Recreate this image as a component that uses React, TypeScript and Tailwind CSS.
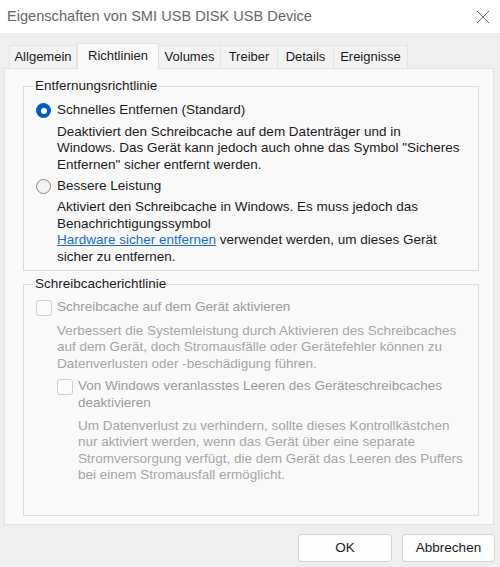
import React from "react";

const Radio = ({ checked }: { checked: boolean }) =>
  checked ? (
    <span className="flex h-[15px] w-[15px] shrink-0 items-center justify-center rounded-full bg-[#005fb8]">
      <span className="h-[6px] w-[6px] rounded-full bg-white" />
    </span>
  ) : (
    <span className="block h-[15px] w-[15px] shrink-0 rounded-full border border-[#8a8a8a] bg-[#f4f4f4]" />
  );

const Check = () => (
  <span className="block h-[16px] w-[16px] shrink-0 rounded-[3px] border border-[#cfcfcf] bg-[#fbfbfb]" />
);

const tabs = [
  { label: "Allgemein", w: "w-[68px]" },
  { label: "Richtlinien", w: "w-[82px]", active: true },
  { label: "Volumes", w: "w-[63px]" },
  { label: "Treiber", w: "w-[58px]" },
  { label: "Details", w: "w-[57px]" },
  { label: "Ereignisse", w: "w-[75px]" },
];

export default function App() {
  return (
    <div className="flex h-[567px] w-[500px] flex-col overflow-hidden bg-[#efefef] font-['Liberation_Sans',Arial,sans-serif] text-[13px] leading-[16.4px] text-[#1b1b1b]">
      {/* Title bar */}
      <div className="flex h-[33px] shrink-0 items-center justify-between bg-white pl-[7px] pr-[10px]">
        <span className="text-[14.6px] text-[#666666]">Eigenschaften von SMI USB DISK USB Device</span>
        <svg width="14" height="14" viewBox="0 0 14 14">
          <path d="M1 1 L13 13 M13 1 L1 13" stroke="#6a6a6a" strokeWidth="1" />
        </svg>
      </div>

      {/* Tabs */}
      <div className="mt-[10px] flex h-[25px] items-end pl-[9px]">
        {tabs.map((t) =>
          t.active ? (
            <div
              key={t.label}
              className={`relative z-10 -mb-[1px] flex h-[26px] ${t.w} items-start justify-center border border-b-0 border-[#e2e2e2] bg-[#f9f9f9] pt-[4px]`}
            >
              {t.label}
            </div>
          ) : (
            <div
              key={t.label}
              className={`-ml-[1px] flex h-[23px] ${t.w} items-center justify-center border border-b-0 border-[#e4e4e4] bg-[#f3f3f3] pt-[1px] first:ml-0`}
            >
              {t.label}
            </div>
          )
        )}
      </div>

      {/* Panel */}
      <div className="ml-[4px] flex h-[457px] w-[490px] flex-col border border-[#e2e2e2] bg-[#f9f9f9] pl-[18px] pt-[9px] text-[13.5px]">
        <fieldset className="w-[456px] border border-[#dcdcdc] pb-[5px] pl-[12px]">
          <legend className="-ml-[3px] px-[2px]">Entfernungsrichtlinie</legend>
          <div className="mt-[8px] flex items-center gap-[6px]">
            <Radio checked />
            <span>Schnelles Entfernen (Standard)</span>
          </div>
          <p className="mt-[5px] whitespace-nowrap pl-[21px]">
            Deaktiviert den Schreibcache auf dem Datenträger und in
            <br />
            Windows. Das Gerät kann jedoch auch ohne das Symbol "Sicheres
            <br />
            Entfernen" sicher entfernt werden.
          </p>
          <div className="mt-[5px] flex items-center gap-[6px]">
            <Radio checked={false} />
            <span>Bessere Leistung</span>
          </div>
          <p className="mt-[5px] whitespace-nowrap pl-[21px]">
            Aktiviert den Schreibcache in Windows. Es muss jedoch das
            <br />
            Benachrichtigungssymbol
            <br />
            <span className="text-[#1a6ccb] underline decoration-[#1a6ccb]">Hardware sicher entfernen</span> verwendet werden, um dieses Gerät
            <br />
            sicher zu entfernen.
          </p>
        </fieldset>

        <fieldset className="mt-[5px] h-[240px] w-[456px] border border-[#dcdcdc] pl-[12px]">
          <legend className="-ml-[3px] px-[2px]">Schreibcacherichtlinie</legend>
          <div className="mt-[7px] flex items-center gap-[5px]">
            <Check />
            <span className="text-[#9c9c9c]">Schreibcache auf dem Gerät aktivieren</span>
          </div>
          <p className="mt-[7px] whitespace-nowrap pl-[21px] text-[#a6a6a6]">
            Verbessert die Systemleistung durch Aktivieren des Schreibcaches
            <br />
            auf dem Gerät, doch Stromausfälle oder Gerätefehler können zu
            <br />
            Datenverlusten oder -beschädigung führen.
          </p>
          <div className="mt-[6px] flex items-start gap-[5px] pl-[21px]">
            <span className="mt-[1px] flex">
              <Check />
            </span>
            <span className="whitespace-nowrap text-[#9c9c9c]">
              Von Windows veranlasstes Leeren des Geräteschreibcaches
              <br />
              deaktivieren
            </span>
          </div>
          <p className="mt-[7px] whitespace-nowrap pl-[42px] text-[#a6a6a6]">
            Um Datenverlust zu verhindern, sollte dieses Kontrollkästchen
            <br />
            nur aktiviert werden, wenn das Gerät über eine separate
            <br />
            Stromversorgung verfügt, die dem Gerät das Leeren des Puffers
            <br />
            bei einem Stromausfall ermöglicht.
          </p>
        </fieldset>
      </div>

      {/* Buttons */}
      <div className="mt-[9px] flex justify-end gap-[10px] pr-[5px]">
        <button className="h-[28px] w-[94px] rounded-[4px] border border-[#d4d4d4] bg-[#fdfdfd] text-[13.5px] text-[#1b1b1b]">
          OK
        </button>
        <button className="h-[28px] w-[93px] rounded-[4px] border border-[#d4d4d4] bg-[#fdfdfd] text-[13.5px] text-[#1b1b1b]">
          Abbrechen
        </button>
      </div>
    </div>
  );
}
